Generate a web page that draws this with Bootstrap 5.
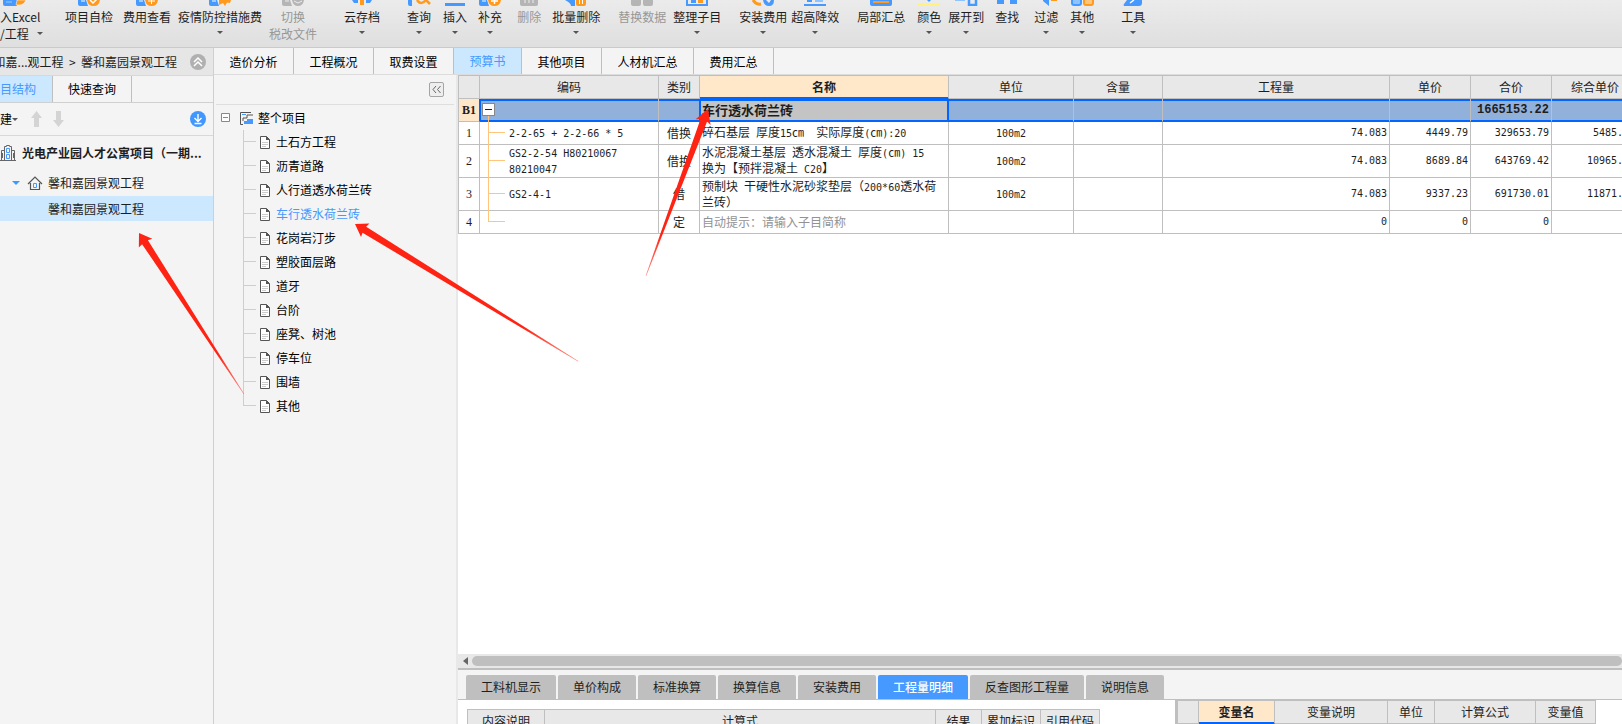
<!DOCTYPE html>
<html lang="zh-CN">
<head>
<meta charset="utf-8">
<meta name="viewport" content="width=device-width, initial-scale=1">
<title>预算书</title>
<link href="https://cdn.jsdelivr.net/npm/bootstrap@5.3.0/dist/css/bootstrap.min.css" rel="stylesheet">
<style>
  :root { --line: #bfbfbf; --soft: #d8d8d8; --panel: #f4f4f4; --head: #e8e8e8; --pick: #cce8ff; --blue: #4599ff; --focus: #0066ff; --peach: #ffe7ca; --branch: #ffc57a; }
  body { font: 12px/16px "Noto Sans CJK SC", sans-serif; color: #1e1e1e; background: var(--panel); }
  svg { display: block; flex: none; }
  button { font-family: inherit; color: inherit; }
  a { color: inherit; text-decoration: none; }
  .mono { font-family: "DejaVu Sans Mono", monospace; font-size: 10px; white-space: pre; }

  .toolbar { height: 48px; background: linear-gradient(#ebebeb, #dfdfdf); border-bottom: 1px solid #cacaca; }
  .tool { --bs-btn-font-size: 12px; --bs-btn-line-height: 17px; --bs-btn-padding-x: 0; --bs-btn-padding-y: 0; --bs-btn-border-width: 0; --bs-btn-color: #1e1e1e; flex: none; display: flex; flex-direction: column; align-items: center; height: 47px; border-radius: 0; white-space: nowrap; }
  .tool svg { margin-bottom: 2px; }
  .tool.off { color: #979797; }
  .tool.drop::after, .caret::after { content: ""; border: 3px solid transparent; border-top-color: #555; border-bottom: 0; margin-top: 6px; }
  .caret::after { margin: 0; }
  .s4 { margin-left: 4px } .s7 { margin-left: 7px } .s10 { margin-left: 10px } .s11 { margin-left: 11px } .s12 { margin-left: 12px } .s15 { margin-left: 15px } .s18 { margin-left: 18px } .s27 { margin-left: 27px }
  .import { width: 54px; }

  .side { flex: 0 0 214px; min-width: 0; border-right: 1px solid #cfcfcf; }
  .crumb { height: 28px; background: #e6e6e6; border-bottom: 1px solid var(--soft); padding-right: 6px; }
  .sidetabs { height: 27px; border-bottom: 1px solid #d0d0d0; }
  .flat { border: 0; background: none; padding: 0; white-space: nowrap; color: #000; }
  .sidetabs .flat { border-right: 1px solid var(--line); }
  .flat.active { background: var(--pick); color: var(--blue); }
  .sidebar-tools { height: 33px; border-bottom: 1px solid var(--soft); }
  .proj { height: 26px; }
  .proj.top { height: 34px; }
  .proj.sel { height: 25px; background: var(--pick); }
  .proj .root { margin-left: 6px; }

  .maintabs { height: 27px; border-bottom: 1px solid #dcdcdc; }
  .maintabs .flat { width: 80px; padding-top: 2px; border-right: 1px solid var(--line); }
  .maintabs .flat.w68 { width: 68px; padding-top: 0 } .maintabs .flat.w92 { width: 92px }

  .sections { flex: 0 0 242px; color: #000; }
  .sections-head { height: 30px; margin: 0 2px 1px; border-bottom: 1px solid #dedede; padding-right: 10px; }
  .fold { width: 15px; height: 15px; border: 1px solid #a5a5a5; border-radius: 2px; background: #eee; padding: 0; }
  .sections li { height: 24px; display: flex; align-items: center; }
  .leaf { position: relative; margin-left: 29px; padding-left: 17px; }
  .leaf::before { content: ""; position: absolute; left: 0; top: 0; height: 24px; border-left: 1px solid var(--branch); }
  .leaf:last-child::before { height: 12px; }
  .leaf::after { content: ""; position: absolute; left: 0; top: 11px; width: 13px; border-top: 1px solid var(--branch); }
  .leaf a { margin-left: 6px; }
  .leaf a.current { color: var(--blue); }

  .work { border-left: 2px solid var(--head); background: #fff; }
  .sheet { border-collapse: separate; border-spacing: 0; table-layout: fixed; border-left: 1px solid var(--line); border-top: 1px solid var(--line); line-height: 14px; }
  .sheet th, .sheet td { border-right: 1px solid var(--line); border-bottom: 1px solid var(--line); padding: 0 2px; height: 23px; vertical-align: middle; white-space: nowrap; }
  .sheet th { background: var(--head); font-weight: 400; text-align: center; }
  .sheet .peach { background: var(--peach); font-weight: 700; }
  .sheet thead .peach { border-bottom-color: var(--focus); box-shadow: inset 0 -1px var(--focus); }
  .sheet tr.tall td { height: 33px; }
  .budget { width: calc(100% + 17px); }
  .budget td:first-child { font-family: "Liberation Serif", serif; font-size: 12px; text-align: center; }
  .budget td:nth-child(3), .budget td:nth-child(5) { text-align: center; }
  .budget td:nth-child(n+7) { text-align: right; font-family: "DejaVu Sans Mono", monospace; font-size: 10px; }
  .budget td:nth-child(10) { padding-right: 15px; }
  .budget td.hint { color: #929292; }
  .code { position: relative; }
  .budget td.code { padding-left: 29px; }
  .code::before { content: ""; position: absolute; left: 8px; top: 0; bottom: -1px; border-left: 1px solid var(--branch); }
  tr:last-child .code::before { bottom: 12px; }
  .code::after { content: ""; position: absolute; left: 8px; top: 50%; width: 17px; margin-top: -1px; border-top: 1px solid var(--branch); }
  tr.pickrow .code::before { top: 16px; }
  tr.pickrow .code::after { display: none; }
  .toggle { position: absolute; left: 2px; top: 4px; width: 13px; height: 13px; border: 1px solid #888; background: #fff; padding: 0; }
  .toggle::after { content: ""; display: block; margin: 0 2px; border-top: 1px solid #222; }
  .sheet tr.pickrow td { background: #91b1db; border-bottom-color: var(--focus); box-shadow: inset 0 2px var(--focus), inset 0 -1px var(--focus); }
  .sheet tr.pickrow td.peach { background: var(--peach); border-bottom-color: var(--line); border-right-color: var(--focus); box-shadow: none; }
  .sheet tr.pickrow td.code { box-shadow: inset 1px 0 var(--focus), inset 0 2px var(--focus), inset 0 -1px var(--focus); }
  .sheet tr.pickrow td:nth-child(3) { border-right-color: var(--focus); }
  .sheet tr.pickrow td.here { font-size: 13px; background: #c4c4c4; border-right-color: var(--focus); box-shadow: inset 1px 0 var(--focus), inset -1px 0 var(--focus), inset 0 2px var(--focus), inset 0 -1px var(--focus); }
  .sheet tr.pickrow .total { font-size: 12px; font-weight: 700; font-family: "Liberation Mono", monospace; }

  .hscroll { height: 16px; background: var(--head); border-bottom: 2px solid var(--line); padding-left: 5px; gap: 4px; }
  .thumb { height: 10px; border-radius: 5px; background: var(--line); }
  .lowtabs { height: 30px; background: var(--panel); border-bottom: 1px solid var(--line); padding: 5px 0 0 8px; gap: 2px; }
  .lowtabs .flat { width: 78px; background: var(--line); color: #1e1e1e; border-radius: 2px 2px 0 0; }
  .lowtabs .flat.w90 { width: 90px } .lowtabs .flat.w114 { width: 114px }
  .lowtabs .flat.active { background: var(--blue); color: #fff; font-weight: 500; }
  .lower { flex: 0 0 24px; }
  .detail { width: 633px; margin: 9px 0 0 9px; }
  .vars { flex: 0 0 447px; border-left: 3px solid var(--line); }
  .vars table { width: 418px; border-left: 0; }
  .marks { position: absolute; left: 0; top: 0; pointer-events: none; }
</style>
</head>
<body class="vh-100 d-flex flex-column overflow-hidden position-relative">

<div class="toolbar d-flex flex-shrink-0 overflow-hidden" role="toolbar">
  <button class="btn tool import align-items-start">
    <svg width="28" height="6"><path d="M3 0h14v6H5q-2 0-2-2z" fill="#4599ff"/><path d="M6 2h6M17 0h9q-2 5-7 5h-3z" fill="#ff9a1e" stroke="#fff" stroke-width=".5"/></svg>
    <span>入Excel</span><span class="caret d-flex align-items-center gap-2">/工程</span></button>
  <button class="btn tool s11"><svg width="24" height="6"><path d="M1 0h8l2 6H3q-2 0-2-2z" fill="#4599ff"/><path d="M4 1h4" stroke="#fff"/><path d="M10 0h13q-1 6-6.500 6T10 0" fill="#ff9a1e"/><path d="M13 0l3 3 4-4" stroke="#fff" stroke-width="1.500" fill="none"/></svg>项目自检</button>
  <button class="btn tool s10"><svg width="24" height="6"><path d="M1 0h8l2 6H3q-2 0-2-2z" fill="#4599ff"/><path d="M4 1h4" stroke="#fff"/><path d="M10 0h13q-1 6-6.500 6T10 0" fill="#ff9a1e"/><path d="M13 1h7M16.500 0v4" stroke="#fff"/></svg>费用查看</button>
  <button class="btn tool drop s7"><svg width="24" height="6"><path d="M1 0h8l2 6H3q-2 0-2-2z" fill="#4599ff"/><path d="M4 1h4" stroke="#fff"/><path d="M11 0h12l-1 3-3-.5L17 6l-2-3-4 2z" fill="#ff9a1e"/></svg>疫情防控措施费</button>
  <button class="btn tool off s7"><svg width="24" height="6"><path d="M1 0h8l2 6H3q-2 0-2-2zM11 0h12q-1 6-6 6t-6-6" fill="#b5b5b5"/><path d="M4 1h4M13 1l4 2 4-2" stroke="#eee" fill="none"/></svg>切换<span>税改文件</span></button>
  <button class="btn tool drop s27"><svg width="24" height="6"><path d="M2 0h6v3H4zM16 0h6l-2 3h-4z" fill="#4599ff"/><path d="M10 0h4v5h-4z" fill="#ff9a1e"/></svg>云存档</button>
  <button class="btn tool drop s27"><svg width="24" height="6"><path d="M1 0h4v6H3q-2 0-2-2z" fill="#4599ff"/><path d="M10 0q4 6 9 0l4 4" fill="none" stroke="#ff9a1e" stroke-width="2.500"/></svg>查询</button>
  <button class="btn tool drop s12"><svg width="24" height="6"><path d="M2 3h20v3H2z" fill="#4599ff"/></svg>插入</button>
  <button class="btn tool drop s11"><svg width="24" height="6"><path d="M1 0h8l2 6H3q-2 0-2-2z" fill="#4599ff"/><path d="M4 1h4" stroke="#fff"/><path d="M10 0h13q-1 6-6.500 6T10 0" fill="#ff9a1e"/><path d="M13 1h7M16.500 0v4" stroke="#fff" stroke-width="1.500"/></svg>补充</button>
  <button class="btn tool off s15"><svg width="24" height="6"><path d="M3 0h18v4q0 2-2 2H5q-2 0-2-2z" fill="#b5b5b5"/><path d="M8 0v3M12 0v3M16 0v3" stroke="#eee"/></svg>删除</button>
  <button class="btn tool drop s11"><svg width="24" height="6"><path d="M1 0h10v6H7q0-3-6-6" fill="#4599ff"/><path d="M12 0h10v4q0 2-2 2h-6q-2 0-2-2z" fill="#ff9a1e"/><path d="M15.500 0v4M18.500 0v4" stroke="#fff"/></svg>批量删除</button>
  <button class="btn tool off s18"><svg width="24" height="6"><path d="M1 0h10v4q0 2-2 2H3q-2 0-2-2zM13 0h10v4q0 2-2 2h-6q-2 0-2-2z" fill="#b5b5b5"/></svg>替换数据</button>
  <button class="btn tool drop s7"><svg width="24" height="6"><path d="M2 0v5h20V0" fill="none" stroke="#4599ff" stroke-width="2"/><path d="M6 0h5v3H6z" fill="#4599ff"/><path d="M13 0h5v3h-5z" fill="#ff9a1e"/></svg>整理子目</button>
  <button class="btn tool drop s18"><svg width="24" height="6"><path d="M2 0q3 5 8 4" fill="none" stroke="#ff9a1e" stroke-width="3"/><path d="M12 0q1 6 6 6t5-6h-3l-2 3-3-3z" fill="#4599ff"/></svg>安装费用</button>
  <button class="btn tool drop s4"><svg width="24" height="6"><path d="M1 4h22v2H1zM4 0h5v2H4z" fill="#4599ff"/><path d="M12 0h8v2h-8z" fill="#8ec3ff"/></svg>超高降效</button>
  <button class="btn tool s18"><svg width="24" height="6"><path d="M1 0h22v4q0 2-2 2H3q-2 0-2-2z" fill="#4599ff"/><path d="M4 2h16" stroke="#ff9a1e" stroke-width="2"/></svg>局部汇总</button>
  <button class="btn tool drop s12"><svg width="24" height="6"><path d="M1 3h22v3H1z" fill="#fff27d"/><path d="M10 0h4l-2 2z" fill="#4599ff"/></svg>颜色</button>
  <button class="btn tool drop s7"><svg width="24" height="6"><path d="M1 0h10v1H1z" fill="#8ec3ff"/><path d="M15 0v5h7V0" fill="none" stroke="#4599ff" stroke-width="2.500"/></svg>展开到</button>
  <button class="btn tool s11"><svg width="24" height="6"><path d="M2 0h7v4H2zM15 0h7v4h-7z" fill="#4599ff"/></svg>查找</button>
  <button class="btn tool drop s15"><svg width="24" height="6"><path d="M9 0h6v6L9 1z" fill="#4599ff"/><path d="M17 0h6v1h-6z" fill="#ff9a1e"/></svg>过滤</button>
  <button class="btn tool drop s12"><svg width="24" height="6"><path d="M2 0v3q0 2 2 2h5q2 0 2-2V0" fill="#8ec3ff" stroke="#4599ff" stroke-width="2"/><path d="M14 0v3q0 2 2 2h5q2 0 2-2V0" fill="#ffc57a" stroke="#ff9a1e" stroke-width="2"/></svg>其他</button>
  <button class="btn tool drop s27"><svg width="24" height="6"><path d="M3 6q-1-1 0-2l3-4h15v3q0 3-3 3z" fill="#4599ff"/><path d="M9 3l4-3" stroke="#fff" stroke-width="1.500"/></svg>工具</button>
</div>

<div class="d-flex flex-grow-1 overflow-hidden">
  <aside class="side d-flex flex-column overflow-hidden">
    <div class="crumb d-flex align-items-center justify-content-end text-nowrap overflow-hidden flex-shrink-0">
      <span>和嘉...观工程&nbsp; &gt;&nbsp; 馨和嘉园景观工程</span>
      <svg class="ms-2" width="22" height="18" viewBox="0 0 22 18"><circle cx="13" cy="9" r="8" fill="#b0b0b0"/><path d="M9 9l4-4 4 4M9 13l4-4 4 4" stroke="#fff" stroke-width="1.500" fill="none"/></svg>
    </div>
    <div class="sidetabs d-flex flex-shrink-0">
      <button class="flat active d-flex align-items-center justify-content-end overflow-hidden pe-3" style="width:53px">项目结构</button>
      <button class="flat" style="width:79px">快速查询</button>
    </div>
    <div class="sidebar-tools d-flex align-items-center flex-shrink-0">
      <button class="flat caret d-flex align-items-center">建</button>
      <svg class="ms-2" width="40" height="18" viewBox="0 0 40 18"><path d="M10.500 1L16 8h-3v9H8V8H5zM32.500 17L38 10h-3V1h-5v9h-3z" fill="#d4d4d4"/></svg>
      <svg class="ms-auto" style="margin-right:7px" width="16" height="16" viewBox="0 0 16 16"><circle cx="8" cy="8" r="8" fill="#3f97ff"/><path d="M8 3v7M4.500 7L8 10.500 11.500 7M4.500 12.500h7" stroke="#fff" stroke-width="1.400" fill="none"/></svg>
    </div>
    <div class="proj top d-flex align-items-center text-nowrap fw-bold flex-shrink-0">
      <svg width="16" height="16" viewBox="0 0 16 16" fill="none" stroke="#666"><path d="M4.500 15.500V1.500h2v-1h3v1h2v14M4 5.500H1.500v10h13v-10H12M0 15.500h16"/><path d="M6.500 3.500h3v4h-3zM6.500 9.500h3v4h-3z" stroke="#4599ff"/><path d="M2.500 8v5M13.500 8v5"/></svg>
      <a href="#" class="root">光电产业园人才公寓项目（一期...</a>
    </div>
    <div class="proj d-flex align-items-center flex-shrink-0">
      <svg width="48" height="16" viewBox="0 0 48 16"><path d="M12 6h8l-4 4z" fill="#3f97ff"/><path d="M28 9l7-7 7 7M30.500 8v6.500h9V8" fill="none" stroke="#555" stroke-width="1.200"/><path d="M33.500 8.500h3v4h-3z" fill="none" stroke="#4599ff"/></svg>
      <a href="#">馨和嘉园景观工程</a>
    </div>
    <div class="proj sel d-flex align-items-center flex-shrink-0"><a href="#" class="ms-5">馨和嘉园景观工程</a></div>
  </aside>

  <div class="d-flex flex-column flex-grow-1 overflow-hidden">
    <div class="maintabs d-flex flex-shrink-0">
      <button class="flat">造价分析</button><button class="flat">工程概况</button><button class="flat">取费设置</button><button class="flat active w68">预算书</button><button class="flat">其他项目</button><button class="flat w92">人材机汇总</button><button class="flat">费用汇总</button>
    </div>
    <div class="d-flex flex-grow-1 overflow-hidden">
      <nav class="sections">
        <div class="sections-head d-flex align-items-center justify-content-end">
          <button class="fold" aria-label="收起"><svg width="13" height="13" viewBox="0 0 13 13"><path d="M6 3L3 6.500 6 10M10.500 3l-3 3.500 3 3.500" fill="none" stroke="#666"/></svg></button>
        </div>
        <ul class="list-unstyled m-0">
          <li><svg width="44" height="16" viewBox="0 0 44 16"><path d="M7.500 3.500h8v8h-8z" fill="#fff" stroke="#888"/><path d="M9 7.500h5" stroke="#3f97ff"/><path d="M37 2.500H26.500v12H29" fill="none" stroke="#555"/><path d="M28 4h4v1h-4zM30 14v-3h3v-2h6v5z" fill="#4599ff"/><path d="M29 11V8h4V5h6" fill="none" stroke="#555"/></svg><a href="#">整个项目</a></li>
          <li class="leaf"><svg width="10" height="13"><use href="#doc"/></svg><a href="#">土石方工程</a></li>
          <li class="leaf"><svg width="10" height="13"><use href="#doc"/></svg><a href="#">沥青道路</a></li>
          <li class="leaf"><svg width="10" height="13"><use href="#doc"/></svg><a href="#">人行道透水荷兰砖</a></li>
          <li class="leaf"><svg width="10" height="13"><use href="#doc"/></svg><a href="#" class="current">车行透水荷兰砖</a></li>
          <li class="leaf"><svg width="10" height="13"><use href="#doc"/></svg><a href="#">花岗岩汀步</a></li>
          <li class="leaf"><svg width="10" height="13"><use href="#doc"/></svg><a href="#">塑胶面层路</a></li>
          <li class="leaf"><svg width="10" height="13"><use href="#doc"/></svg><a href="#">道牙</a></li>
          <li class="leaf"><svg width="10" height="13"><use href="#doc"/></svg><a href="#">台阶</a></li>
          <li class="leaf"><svg width="10" height="13"><use href="#doc"/></svg><a href="#">座凳、树池</a></li>
          <li class="leaf"><svg width="10" height="13"><use href="#doc"/></svg><a href="#">停车位</a></li>
          <li class="leaf"><svg width="10" height="13"><use href="#doc"/></svg><a href="#">围墙</a></li>
          <li class="leaf"><svg width="10" height="13"><use href="#doc"/></svg><a href="#">其他</a></li>
        </ul>
      </nav>

      <main class="work d-flex flex-column flex-grow-1 overflow-hidden">
        <div class="flex-grow-1 overflow-hidden">
          <table class="sheet budget">
            <colgroup><col style="width:21px"><col style="width:179px"><col style="width:41px"><col style="width:249px"><col style="width:125px"><col style="width:89px"><col><col style="width:81px"><col style="width:81px"><col style="width:87px"></colgroup>
            <thead><tr><th></th><th>编码</th><th>类别</th><th class="peach">名称</th><th>单位</th><th>含量</th><th>工程量</th><th>单价</th><th>合价</th><th>综合单价</th></tr></thead>
            <tbody>
              <tr class="pickrow"><td class="peach">B1</td><td class="code"><button class="toggle" aria-label="折叠"></button></td><td></td><td class="here fw-bold">车行透水荷兰砖</td><td></td><td></td><td></td><td></td><td class="total">1665153.22</td><td></td></tr>
              <tr><td>1</td><td class="code"><span class="mono">2-2-65 + 2-2-66 * 5</span></td><td>借换</td><td>碎石基层<span class="mono"> </span>厚度<span class="mono">15</span>㎝<span class="mono">  </span>实际厚度<span class="mono">(</span>㎝<span class="mono">):20</span></td><td><span class="mono">100m2</span></td><td></td><td>74.083</td><td>4449.79</td><td>329653.79</td><td>5485.</td></tr>
              <tr class="tall"><td>2</td><td class="code"><span class="mono">GS2-2-54 H80210067</span><br><span class="mono">80210047</span></td><td>借换</td><td>水泥混凝土基层<span class="mono"> </span>透水混凝土<span class="mono"> </span>厚度<span class="mono">(</span>㎝<span class="mono">) 15</span><br>换为【预拌混凝土<span class="mono"> C20</span>】</td><td><span class="mono">100m2</span></td><td></td><td>74.083</td><td>8689.84</td><td>643769.42</td><td>10965.</td></tr>
              <tr class="tall"><td>3</td><td class="code"><span class="mono">GS2-4-1</span></td><td>借</td><td>预制块<span class="mono"> </span>干硬性水泥砂浆垫层（<span class="mono">200*60</span>透水荷<br>兰砖）</td><td><span class="mono">100m2</span></td><td></td><td>74.083</td><td>9337.23</td><td>691730.01</td><td>11871.</td></tr>
              <tr><td>4</td><td class="code"></td><td>定</td><td class="hint">自动提示：请输入子目简称</td><td></td><td></td><td>0</td><td>0</td><td>0</td><td></td></tr>
            </tbody>
          </table>
        </div>
        <div class="hscroll d-flex align-items-center flex-shrink-0">
          <svg width="5" height="8"><path d="M5 0v8L0 4z" fill="#666"/></svg><div class="thumb flex-grow-1"></div>
        </div>
        <div class="lowtabs d-flex flex-shrink-0">
          <button class="flat w90">工料机显示</button><button class="flat">单价构成</button><button class="flat">标准换算</button><button class="flat">换算信息</button><button class="flat">安装费用</button><button class="flat w90 active">工程量明细</button><button class="flat w114">反查图形工程量</button><button class="flat">说明信息</button>
        </div>
        <div class="lower d-flex overflow-hidden">
          <div class="flex-grow-1 overflow-hidden">
            <table class="sheet detail">
              <colgroup><col style="width:77px"><col><col style="width:46px"><col style="width:59px"><col style="width:59px"></colgroup>
              <thead><tr><th>内容说明</th><th>计算式</th><th>结果</th><th>累加标识</th><th>引用代码</th></tr></thead>
            </table>
          </div>
          <div class="vars">
            <table class="sheet">
              <colgroup><col style="width:21px"><col style="width:76px"><col style="width:113px"><col style="width:47px"><col style="width:101px"><col></colgroup>
              <thead><tr><th></th><th class="peach">变量名</th><th>变量说明</th><th>单位</th><th>计算公式</th><th>变量值</th></tr></thead>
            </table>
          </div>
        </div>
      </main>
    </div>
  </div>
</div>

<!-- Red pointer arrows laid over the workspace -->
<svg class="marks" width="720" height="420" viewBox="0 0 720 420" aria-hidden="true">
  <defs>
    <symbol id="doc" viewBox="0 0 10 13"><path d="M.5.5h6l3 3v9h-9z" fill="#fff" stroke="#555"/><path d="M6 0l4 4H6z" fill="#555"/><path d="M2 6.500h6M2 8.500h6M2 10.500h4" stroke="#ccc"/></symbol>
    <linearGradient id="fade"><stop offset=".75" stop-color="#ff2313"/><stop offset="1" stop-color="#ff2313" stop-opacity=".5"/></linearGradient>
  </defs>
  <g fill="url(#fade)">
    <path transform="translate(139 233) rotate(56.900)" d="M0 0L12-8 11-3.500 192-.3V.3L11 3.500 12 8z"/>
    <path transform="translate(355 224) rotate(31.600)" d="M0 0L12-8 11-3.500 262-.3V.3L11 3.500 12 8z"/>
    <path transform="translate(708 109) rotate(110.400)" d="M0 0L14-8 12-3.500 178-.3V.3L12 3.500 14 8z"/>
  </g>
</svg>
<script src="https://cdn.jsdelivr.net/npm/bootstrap@5.3.0/dist/js/bootstrap.bundle.min.js"></script>
</body>
</html>
